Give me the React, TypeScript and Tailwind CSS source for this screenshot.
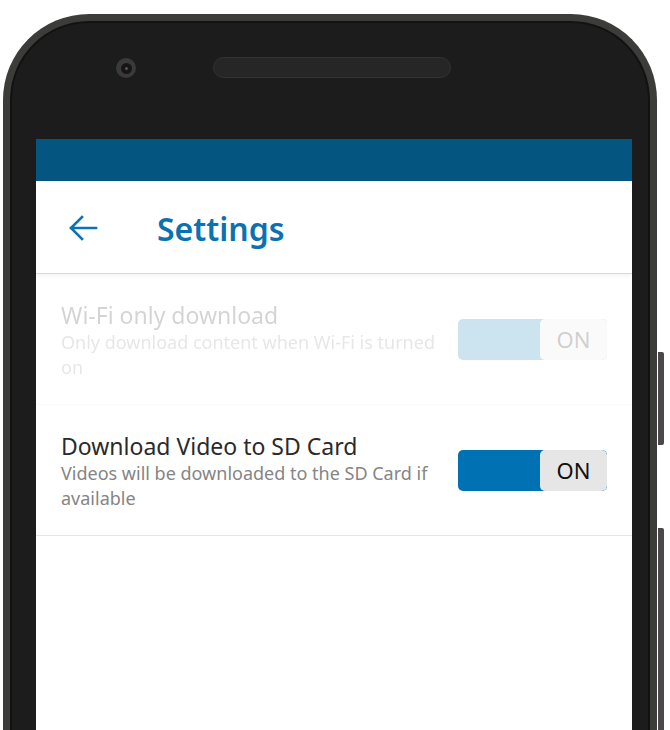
import React from "react";

interface SettingRow {
    title: string;
    description: string;
    enabled: boolean;
}

const rows: SettingRow[] = [
    {
        title: "Wi-Fi only download",
        description: "Only download content when Wi-Fi is turned on",
        enabled: false,
    },
    {
        title: "Download Video to SD Card",
        description: "Videos will be downloaded to the SD Card if available",
        enabled: true,
    },
];

const BackArrow: React.FC = () => (
    <svg width="30" height="26" viewBox="0 0 30 26" fill="none">
        <path d="M3 13 H28 M14 2 L3 13 L14 24" stroke="#0b73b3" strokeWidth="2.6" strokeLinecap="square" />
    </svg>
);

const Toggle: React.FC = () => (
    <div className="flex w-[149px] h-[41px] shrink-0 rounded-[5px] overflow-hidden bg-[#0072b4]">
        <div className="flex-1" />
        <div className="w-[67px] h-full rounded-[5px] bg-[#e6e6e6] flex items-center justify-center text-[22px] text-[#111] leading-none">
            ON
        </div>
    </div>
);

const App: React.FC = () => {
    return (
        <div className="w-[670px] h-[730px] overflow-hidden bg-white font-['Noto_Sans','Open_Sans',sans-serif]">
            <div className="flex pt-[14px] pl-[3px]">
                {/* Phone body */}
                <div className="w-[654px] h-[800px] shrink-0 rounded-t-[86px] border-[7px] border-b-0 border-[#3c3c3a] bg-[#1c1c1c] shadow-[inset_0_0_0_2px_#121212] flex flex-col">
                    {/* Camera + speaker */}
                    <div className="h-[118px] flex items-start pt-[36px] pl-[106px]">
                        <div className="w-[20px] h-[20px] mt-[1px] rounded-full bg-[#3a3a3a] flex items-center justify-center">
                            <div className="w-[11px] h-[11px] rounded-full bg-[#161616] flex items-center justify-center">
                                <div className="w-[3px] h-[3px] rounded-full bg-[#6b4a55]" />
                            </div>
                        </div>
                        <div className="ml-[77px] w-[238px] h-[21px] rounded-full bg-[#262626] border border-[#333]" />
                    </div>

                    {/* Screen */}
                    <div className="ml-[26px] w-[596px] flex-1 bg-white flex flex-col">
                        <div className="h-[42px] bg-[#04557f]" />
                        <div className="h-[93px] flex items-center border-b border-[#dadada] shadow-[0_2px_4px_rgba(0,0,0,0.05)]">
                            <div className="ml-[32px] w-[30px] flex items-center pt-[1px]">
                                <BackArrow />
                            </div>
                            <h1 className="ml-[59px] text-[32px] font-semibold text-[#0b72b2] leading-none pt-[3px]">
                                Settings
                            </h1>
                        </div>

                        {rows.map((row) => (
                            <div
                                key={row.title}
                                className={`h-[131px] flex items-center justify-between px-[25px] border-b border-[#e6e6e6] ${row.enabled ? "" : "opacity-20"}`}
                            >
                                <div className="w-[385px] pt-[2px]">
                                    <p className="text-[23px] leading-[30px] text-[#2a2a2a]">{row.title}</p>
                                    <p className="text-[18px] leading-[25px] text-[#858585]">{row.description}</p>
                                </div>
                                <Toggle />
                            </div>
                        ))}
                    </div>
                </div>

                {/* Side buttons */}
                <div className="flex flex-col ml-[1px]">
                    <div className="mt-[338px] w-[6px] h-[93px] rounded-r-[2px] bg-[#4a4848]" />
                    <div className="mt-[83px] w-[6px] h-[300px] rounded-r-[2px] bg-[#4a4848]" />
                </div>
            </div>
        </div>
    );
};

export default App;
